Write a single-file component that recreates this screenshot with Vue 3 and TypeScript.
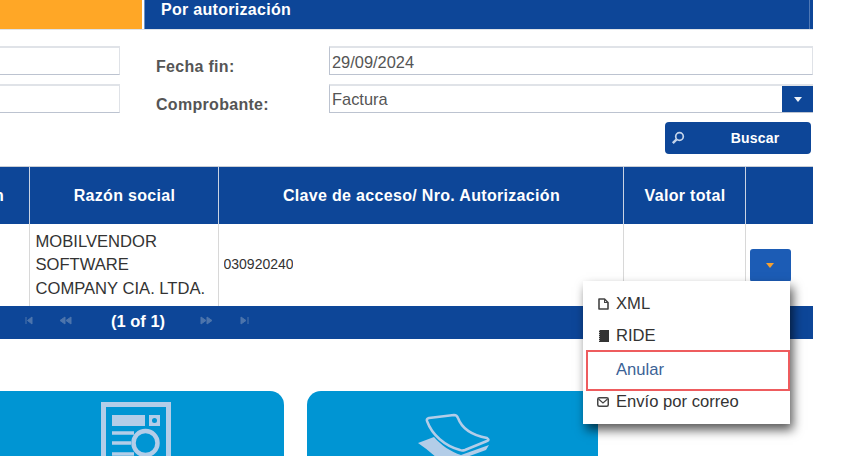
<script setup lang="ts">
const pagerLeft = ['M3 2v7M9 2 4.5 5.5 9 9z', 'M6 2 1 5.5 6 9zM12 2 7 5.5 12 9z']
const pagerRight = ['M1 2l5 3.5L1 9zM7 2l5 3.5L7 9z', 'M2 2l5 3.5L2 9zM9 2v7']
</script>

<template>
  <div class="page">
    <div class="tabs">
      <div class="tab-orange"></div>
      <div class="tab-blue">Por autorización</div>
    </div>

    <div class="form">
      <div class="input cut"></div>
      <label class="label">Fecha fin:</label>
      <div class="input">29/09/2024</div>
      <div class="input cut"></div>
      <label class="label">Comprobante:</label>
      <div class="input select">
        <span>Factura</span>
        <span class="select-btn"><i class="caret white"></i></span>
      </div>
    </div>

    <div class="actions">
      <button class="search">
        <svg class="search-icon" width="14" height="14" viewBox="0 0 14 14">
          <circle cx="8.5" cy="5.5" r="3.8" fill="none" stroke="#c4d4ea" stroke-width="1.7" />
          <path d="M5.6 8.4 1.8 12.2" stroke="#c4d4ea" stroke-width="2.4" />
        </svg>
        <span>Buscar</span>
      </button>
    </div>

    <table class="grid">
      <colgroup>
        <col class="c1" /><col class="c2" /><col class="c3" /><col class="c4" /><col />
      </colgroup>
      <thead>
        <tr>
          <th class="cut-left"><span>n</span></th>
          <th>Razón social</th>
          <th>Clave de acceso/ Nro. Autorización</th>
          <th>Valor total</th>
          <th></th>
        </tr>
      </thead>
      <tbody>
        <tr>
          <td></td>
          <td class="name">MOBILVENDOR<br />SOFTWARE<br />COMPANY CIA. LTDA.</td>
          <td><div class="key">030920240100000000</div></td>
          <td></td>
          <td class="cell-action">
            <button class="row-btn"><i class="caret orange"></i></button>
          </td>
        </tr>
      </tbody>
    </table>

    <div class="pager">
      <svg v-for="d in pagerLeft" :key="d" class="pager-icon" width="13" height="11" viewBox="0 0 13 11">
        <path :d="d" fill="#4c74ac" stroke="#4c74ac" stroke-width="1" />
      </svg>
      <span class="pager-text">(1 of 1)</span>
      <svg v-for="d in pagerRight" :key="d" class="pager-icon" width="13" height="11" viewBox="0 0 13 11">
        <path :d="d" fill="#4c74ac" stroke="#4c74ac" stroke-width="1" />
      </svg>
    </div>

    <div class="cards">
      <div class="card first">
        <svg width="72" height="70" viewBox="0 0 72 70">
          <path fill="none" stroke="#b3cde8" stroke-width="5" d="M2.500 2.500h65v90h-65z" />
          <path fill="#b3cde8" d="M11 13h33v11H11zM48 13h11v11H48z" />
          <circle cx="53.500" cy="18.500" r="2.500" fill="#0095d3" />
          <circle cx="44.500" cy="41" r="12" fill="none" stroke="#b3cde8" stroke-width="4.500" />
          <path stroke="#b3cde8" stroke-width="3.500" d="M11 31h22M11 41h19M11 52h22" />
        </svg>
      </div>
      <div class="card second">
        <svg width="76" height="60" viewBox="0 0 76 60">
          <path fill="#b3cde8" d="M3 38 19 32C26 40 36 47 46 50L74 40l-3 5-22 8 14-1 6 2-4 6H30C22 53 12 44 3 38z" />
          <path fill="#0095d3" stroke="#b3cde8" stroke-width="2.500" stroke-linejoin="round" d="M12 16Q11 14 14 13L39 10Q42 10 43 13C47 24 56 30 72 33Q75 35 72 36L50 45Q47 46 45 45C30 41 17 30 12 16z" />
        </svg>
      </div>
    </div>

    <ul class="menu">
      <li class="item xml">
        <svg width="11" height="12" viewBox="0 0 11 12">
          <path fill="none" stroke="#444" stroke-width="1.600" stroke-linejoin="round" d="M1 1h5.500L10 4.500V11H1z" />
          <path fill="#444" d="M6 1h1v3h3v1H6z" />
        </svg>
        XML
      </li>
      <li class="item ride">
        <svg width="11" height="12" viewBox="0 0 11 12">
          <path fill="#333" d="M1 0h10v12H1z" />
          <path stroke="#aaa" stroke-width="1" stroke-dasharray="1 1" d="M1.500 0v12" />
        </svg>
        RIDE
      </li>
      <li class="item void">Anular</li>
      <li class="item mail">
        <svg width="12" height="10" viewBox="0 0 12 10">
          <rect x=".75" y=".75" width="10.500" height="8.500" rx="1.500" fill="none" stroke="#444" stroke-width="1.500" />
          <path fill="none" stroke="#444" stroke-width="1.200" d="M1.500 2 6 6l4.500-4" />
        </svg>
        Envío por correo
      </li>
    </ul>
  </div>
</template>

<style>
html,
body {
  margin: 0;
  background: #fff;
  overflow: hidden;
}
</style>

<style scoped>
.page {
  position: relative;
  width: 849px;
  height: 456px;
  overflow: hidden;
  font-family: "Liberation Sans", Arial, sans-serif;
  color: #333;
}

.tabs {
  display: flex;
  width: 813px;
  height: 30px;
  border-bottom: 1px solid #dfe3e8;
  box-sizing: border-box;
}

.tab-orange {
  width: 142px;
  background: #ffa726;
}

.tab-blue {
  flex: 1;
  padding: 1px 0 0 16px;
  margin-left: 2px;
  background: #0d4698;
  border-left: 1px solid #6f93c4;
  box-shadow: inset -3px 0 #0d4698, inset -4px 0 #4f78b5;
  color: #fff;
  font-size: 16px;
  font-weight: bold;
  line-height: 18px;
  letter-spacing: 0.3px;
}

.form {
  display: grid;
  grid-template-columns: 120px 209px 484px;
  grid-auto-rows: 29px;
  row-gap: 9px;
  width: 813px;
  margin-top: 16px;
}

.input {
  border: 1px solid #bcc3d0;
  border-top: 2px solid #e0e3e8;
  border-right-color: #dfe2e7;
  background: #fff;
  padding: 2px 0 0 2px;
  font-size: 16.400px;
  line-height: 24px;
  color: #555;
  box-sizing: border-box;
}

.cut {
  margin-left: -10px;
}

.select {
  display: flex;
  justify-content: space-between;
  padding: 0 0 0 2px;
  border-right: 0;
}

.select span:first-child {
  padding-top: 1px;
}

.select-btn {
  display: flex;
  align-items: center;
  justify-content: center;
  width: 31px;
  background: #0d4698;
}

.label {
  padding: 11px 0 0 36px;
  font-size: 16px;
  font-weight: bold;
  line-height: 20px;
  color: #555;
  letter-spacing: 0.3px;
}

.caret {
  display: block;
  width: 0;
  height: 0;
  border-left: 4px solid transparent;
  border-right: 4px solid transparent;
}

.caret.white {
  border-top: 5px solid #eef2f8;
}

.caret.orange {
  border-top: 5px solid #f5a030;
}

.actions {
  display: flex;
  justify-content: flex-end;
  width: 811px;
  margin-top: 9px;
}

.search {
  position: relative;
  display: block;
  width: 146px;
  height: 32px;
  border: 0;
  border-radius: 4px;
  background: #0d4698;
  color: #fff;
  font: bold 14px "Liberation Sans", Arial, sans-serif;
  letter-spacing: 0.2px;
  padding: 0 0 0 34px;
}

.search-icon {
  position: absolute;
  left: 6px;
  top: 9px;
}

.grid {
  width: 813px;
  margin-top: 12px;
  border-collapse: collapse;
  table-layout: fixed;
}

.c1 {
  width: 29px;
}

.c2 {
  width: 189px;
}

.c3 {
  width: 405px;
}

.c4 {
  width: 122px;
}

th {
  height: 57px;
  padding: 2px 0 0 2px;
  border-top: 1px solid #c9ced6;
  border-right: 1px solid #c9d3e3;
  background: #0d4698;
  color: #fff;
  font-size: 16px;
  font-weight: bold;
  letter-spacing: 0.32px;
  box-sizing: border-box;
}

th:last-child {
  border-right: 0;
}

.cut-left {
  text-align: left;
}

.cut-left span {
  display: block;
  margin-left: -8px;
}

td {
  height: 82px;
  padding: 0 5px;
  border-right: 1px solid #d8d8d8;
  font-size: 16.600px;
  line-height: 23.500px;
  box-sizing: border-box;
}

td:last-child {
  border-right: 0;
}

.name {
  white-space: nowrap;
  padding: 1px 0 0 6px;
}

.key {
  width: 69px;
  overflow: hidden;
  white-space: nowrap;
  font-size: 14px;
}

.cell-action {
  padding: 0 0 0 4px;
  vertical-align: top;
}

.row-btn {
  display: flex;
  align-items: center;
  justify-content: center;
  width: 41px;
  height: 33px;
  margin-top: 25px;
  border: 0;
  border-radius: 3px;
  background: #1c5cb5;
}

.pager {
  display: flex;
  align-items: center;
  width: 813px;
  height: 33px;
  padding-left: 23px;
  box-sizing: border-box;
  background: #0d4698;
}

.pager-icon {
  margin: 0 23px 3px 0;
}

.pager-icon:last-child {
  margin-left: 3px;
}

.pager-text {
  margin: 0 35px 2px 16px;
  color: #fff;
  font-size: 16.500px;
  font-weight: bold;
}

.cards {
  display: flex;
  gap: 23px;
  margin-top: 52px;
}

.card {
  display: flex;
  justify-content: center;
  height: 100px;
  background: #0095d3;
  border-radius: 14px;
}

.first {
  width: 300px;
  margin-left: -16px;
  padding-top: 11px;
  box-sizing: border-box;
}

.first svg {
  margin-left: 5px;
}

.second {
  width: 291px;
  padding-top: 14px;
  box-sizing: border-box;
}

.menu {
  position: absolute;
  left: 583px;
  top: 281px;
  width: 207px;
  height: 143px;
  margin: 0;
  padding: 7px 0 0 3px;
  box-sizing: border-box;
  list-style: none;
  background: #fff;
  box-shadow: 3px 6px 10px rgba(0, 0, 0, 0.65);
}

.item {
  display: flex;
  align-items: center;
  height: 31px;
  padding-left: 12px;
  font-size: 16.600px;
  color: #333;
}

.item svg {
  margin-right: 7px;
  flex: none;
}

.ride {
  padding-top: 2px;
  box-sizing: border-box;
}

.void {
  height: 41px;
  padding: 0 0 2px 28px;
  border: 2px solid #ee5c5e;
  box-sizing: border-box;
  color: #3b6296;
}

.mail {
  height: 21px;
  padding-left: 11px;
}
</style>
